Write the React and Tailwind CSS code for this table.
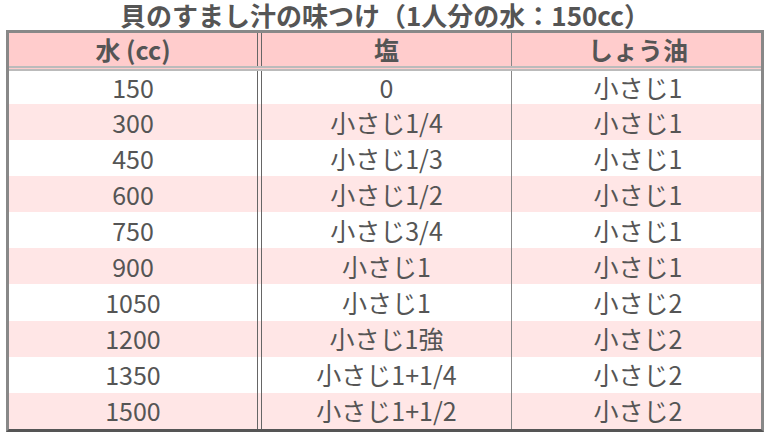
import React from "react";

const rows = [
  ["150", "0", "小さじ1"],
  ["300", "小さじ1/4", "小さじ1"],
  ["450", "小さじ1/3", "小さじ1"],
  ["600", "小さじ1/2", "小さじ1"],
  ["750", "小さじ3/4", "小さじ1"],
  ["900", "小さじ1", "小さじ1"],
  ["1050", "小さじ1", "小さじ2"],
  ["1200", "小さじ1強", "小さじ2"],
  ["1350", "小さじ1+1/4", "小さじ2"],
  ["1500", "小さじ1+1/2", "小さじ2"],
];

function Row({ cells, className }) {
  return (
    <div className={`flex gap-[3px] ${className}`}>
      <div className="w-[249px] border-r border-[#666] flex items-center justify-center whitespace-pre">
        {cells[0]}
      </div>
      <div className="w-[251px] border-l border-r border-l-[#666] border-r-[#888] flex items-center justify-center">
        {cells[1]}
      </div>
      <div className="flex-1 flex items-center justify-center">{cells[2]}</div>
    </div>
  );
}

export default function App() {
  return (
    <div
      className="w-[770px] h-[438px] bg-white text-[#555]"
      style={{ fontFamily: '"Noto Sans CJK JP", "Noto Sans", sans-serif' }}
    >
      <h1 className="h-[30px] text-center text-[26px] font-bold leading-[30px]">
        貝のすまし汁の味つけ（1人分の水：150cc）
      </h1>
      <div className="ml-[6px] w-[758px] border-[3px] border-[#888] border-b-[#555]">
        <Row
          cells={["水 (cc)", "塩", "しょう油"]}
          className="h-[38px] bg-[#ffcccc] border-b-[5px] border-double border-[#bbb] text-[25px] font-bold"
        />
        {rows.map((r, i) => (
          <Row
            key={r[0]}
            cells={r}
            className={`text-[25px] leading-none ${
              i === 0 ? "h-[33px]" : "h-[36.1px]"
            } ${i % 2 === 1 ? "bg-[#ffe6e6]" : "bg-white"}`}
          />
        ))}
      </div>
    </div>
  );
}
